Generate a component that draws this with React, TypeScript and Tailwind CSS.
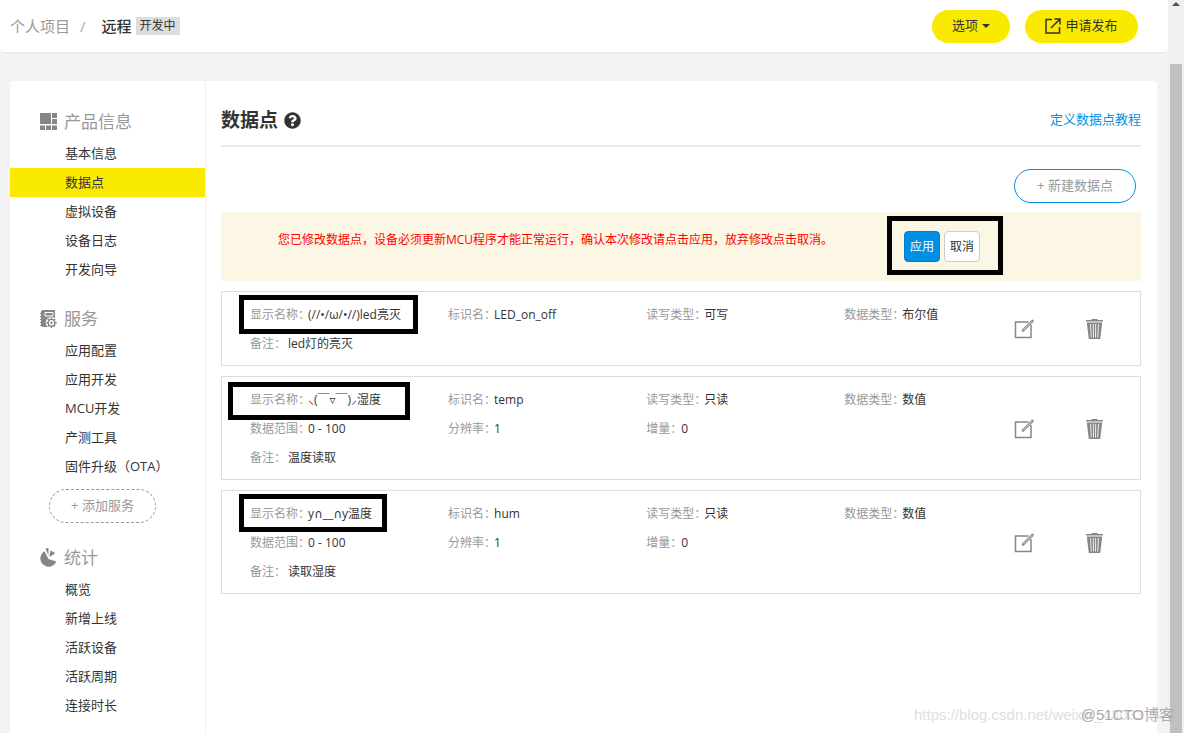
import React from "react";
import { FaQuestionCircle } from "react-icons/fa";

interface NavGroup {
  title: string;
  icon: React.ReactNode;
  items: string[];
  canAdd?: boolean;
}

interface Field {
  label: string;
  value: string;
}

interface DataPoint {
  id: string;
  rows: Field[][];
  note: string;
  mark: string;
}

const GridIcon = () => (
  <svg className="h-[17px] w-[17px]" viewBox="0 0 17 17" fill="#868686" aria-hidden="true">
    <path d="M0 0h11v11H0zM12 0h5v5h-5zM12 6h5v5h-5zM0 12.500h5V17H0zM6 12.500h5V17H6zM12 12.500h5V17h-5z" />
  </svg>
);

const ServiceIcon = () => (
  <svg className="h-[18px] w-[17px]" viewBox="0 0 17 18" aria-hidden="true">
    <path d="M2 0h13v17H2v-1H0v-1h1v-2H0v-1h1v-2H0V9h1V7H0V6h1V4H0V3h1V1h1z" fill="#868686" />
    <path d="M5 2.500h8V6H5z" fill="#868686" stroke="#fff" strokeWidth="1" />
    <circle cx="11.500" cy="12.700" r="5.800" fill="#fff" />
    <circle cx="11.500" cy="12.700" r="3.300" fill="none" stroke="#868686" strokeWidth="1.300" />
    <circle cx="11.500" cy="12.700" r="1.200" fill="#868686" />
    <path
      d="M11.500 7.500v2M11.500 16v2M6.300 12.700h2M14.800 12.700h2M7.800 9l1.400 1.400M13.800 15l1.400 1.400M15.200 9l-1.400 1.400M9.200 15l-1.400 1.400"
      stroke="#868686"
      strokeWidth="1.500"
    />
  </svg>
);

const ChartIcon = () => (
  <svg className="h-[19px] w-[17px]" viewBox="0 0 17 19" fill="#868686" aria-hidden="true">
    <path d="M4.500 3.200 8.500 11l7.800 2.600A8.300 8.300 0 1 1 4.500 3.200z" />
    <path d="M5.500.6 8.600 0 8.300 7z" />
    <path d="M10.500 2.200 15.300 5.200 9.300 9z" />
  </svg>
);

const PublishIcon = () => (
  <svg className="h-4 w-4" viewBox="0 0 16 16" fill="none" stroke="#333" strokeWidth="1.500" aria-hidden="true">
    <path d="M7 1.500H1v13.500h13.500V9" />
    <path d="M6 10 14.500 1.500M9.500 1H15v5.500" />
  </svg>
);

const EditIcon = () => (
  <svg className="h-5 w-5" viewBox="0 0 20 20" fill="none" aria-hidden="true">
    <path d="M14.500 3H1.500v15.500H17V6" stroke="#868686" strokeWidth="1.500" />
    <path d="M9 11.500 18.500 2" stroke="#8a8a8a" strokeWidth="2.600" strokeLinecap="round" />
    <path d="M9.200 11.300 18.300 2.200" stroke="#ddd" strokeWidth="1" />
  </svg>
);

const TrashIcon = () => (
  <svg className="h-5 w-[17px]" viewBox="0 0 17 20" aria-hidden="true">
    <path d="M5.500 0h6v1H17v1.500H0V1h5.500z" fill="#868686" />
    <path d="M.8 3.500h15.400L14.200 20H2.800z" fill="#868686" />
    <path d="M4.500 5l.8 13.500M7.300 5l.2 13.500M9.700 5l-.2 13.500M12.500 5l-.8 13.500" stroke="#eee" strokeWidth="1" />
  </svg>
);

const navGroups: NavGroup[] = [
  {
    title: "产品信息",
    icon: <GridIcon />,
    items: ["基本信息", "数据点", "虚拟设备", "设备日志", "开发向导"],
  },
  {
    title: "服务",
    icon: <ServiceIcon />,
    items: ["应用配置", "应用开发", "MCU开发", "产测工具", "固件升级（OTA）"],
    canAdd: true,
  },
  {
    title: "统计",
    icon: <ChartIcon />,
    items: ["概览", "新增上线", "活跃设备", "活跃周期", "连接时长"],
  },
];

const dataPoints: DataPoint[] = [
  {
    id: "LED_on_off",
    rows: [
      [
        { label: "显示名称：", value: "(//•/ω/•//)led亮灭" },
        { label: "标识名：", value: "LED_on_off" },
        { label: "读写类型：", value: "可写" },
        { label: "数据类型：", value: "布尔值" },
      ],
    ],
    note: "led灯的亮灭",
    mark: "left-[17px] top-[3px] h-[39px] w-[179px]",
  },
  {
    id: "temp",
    rows: [
      [
        { label: "显示名称：", value: "⸜(￣▿￣)⸝湿度" },
        { label: "标识名：", value: "temp" },
        { label: "读写类型：", value: "只读" },
        { label: "数据类型：", value: "数值" },
      ],
      [
        { label: "数据范围：", value: "0 - 100" },
        { label: "分辨率：", value: "1" },
        { label: "增量：", value: "0" },
      ],
    ],
    note: "温度读取",
    mark: "left-[6px] top-[5px] h-[38px] w-[182px]",
  },
  {
    id: "hum",
    rows: [
      [
        { label: "显示名称：", value: "y∩__∩y温度" },
        { label: "标识名：", value: "hum" },
        { label: "读写类型：", value: "只读" },
        { label: "数据类型：", value: "数值" },
      ],
      [
        { label: "数据范围：", value: "0 - 100" },
        { label: "分辨率：", value: "1" },
        { label: "增量：", value: "0" },
      ],
    ],
    note: "读取湿度",
    mark: "left-[17px] top-[3px] h-[38px] w-[148px]",
  },
];

// label column width by number of characters
const labelWidths: Record<number, string> = {
  3: "w-[35px]",
  4: "w-[46px]",
  5: "w-[58px]",
};

const FieldItem = ({ label, value }: Field) => (
  <div className="flex whitespace-nowrap">
    <dt className={`${labelWidths[label.length]} shrink-0 text-[#999]`}>{label}</dt>
    <dd>{value}</dd>
  </div>
);

const DataPointCard = ({ point }: { point: DataPoint }) => (
  <li className="relative flex items-center border border-[#ddd] pt-2 pr-[37px] pb-[7px] pl-7">
    <dl className="min-w-0 flex-1 text-xs leading-[29px]">
      {point.rows.map((row, i) => (
        <div key={i} className="grid grid-cols-[7fr_7fr_7fr_6fr]">
          {row.map((field) => (
            <FieldItem key={field.label} {...field} />
          ))}
        </div>
      ))}
      <div className="flex">
        <dt className="w-[38px] shrink-0 text-[#999]">备注：</dt>
        <dd>{point.note}</dd>
      </div>
    </dl>
    <div className="flex gap-[52px]">
      <button type="button" aria-label="编辑">
        <EditIcon />
      </button>
      <button type="button" aria-label="删除">
        <TrashIcon />
      </button>
    </div>
    <span className={`pointer-events-none absolute border-[5px] border-black ${point.mark}`} />
  </li>
);

const Sidebar = () => (
  <nav className="flex w-[196px] shrink-0 flex-col gap-4 border-r border-[#f0f0f0] pt-[22px]">
    {navGroups.map((group) => (
      <section key={group.title}>
        <h2 className="flex h-9 items-center gap-[7px] pt-px pl-[30px] text-[17px] text-[#999]">
          {group.icon}
          {group.title}
        </h2>
        <ul className="text-[13px] leading-[29px]">
          {group.items.map((item) => (
            <li key={item}>
              <a
                href="#"
                className={`block pl-[55px] whitespace-nowrap ${item === "数据点" ? "bg-[#faea00]" : ""}`}
              >
                {item}
              </a>
            </li>
          ))}
        </ul>
        {group.canAdd && (
          <button
            type="button"
            className="mt-2 ml-[39px] h-[34px] w-[107px] rounded-full border border-dashed border-[#999] text-[13px] text-[#999]"
          >
            + 添加服务
          </button>
        )}
      </section>
    ))}
  </nav>
);

const Header = () => (
  <header className="flex h-[52px] shrink-0 items-center justify-between rounded-b bg-white pr-[30px] pl-[10px] shadow-xs">
    <div className="flex items-center text-[15px]">
      <a href="#" className="text-[#999]">个人项目</a>
      <span className="px-[10px] text-[#aaa]">/</span>
      <h1 className="pl-[6px] font-medium">远程</h1>
      <span className="ml-1 bg-[#ddd] px-1 text-xs leading-[18px]">开发中</span>
    </div>
    <div className="flex gap-[15px] text-[13px]">
      <button type="button" className="flex h-[33px] w-[78px] items-center justify-center gap-1 rounded-full bg-[#faea00]">
        选项
        <span className="border-x-4 border-t-4 border-x-transparent border-t-[#333]" />
      </button>
      <button type="button" className="flex h-[33px] w-[113px] items-center justify-center gap-1 rounded-full bg-[#faea00]">
        <PublishIcon />
        申请发布
      </button>
    </div>
  </header>
);

const App = () => {
  return (
    <div className="relative flex h-screen overflow-hidden bg-[#f3f3f3] font-['Open_Sans','DejaVu_Sans','Noto_Sans_CJK_SC',sans-serif] text-[#333]">
      <div className="flex min-w-0 flex-1 flex-col">
        <Header />
        <div className="mt-[29px] mr-[11px] ml-[10px] flex flex-1 rounded-t bg-white">
          <Sidebar />
          <main className="min-w-0 flex-1 pr-4 pl-[15px]">
            <div className="flex h-[66px] items-center justify-between border-b-2 border-[#e8e8e8] pt-[14px]">
              <h2 className="flex items-center gap-[6px] text-[19px] font-bold">
                数据点
                <FaQuestionCircle className="h-[17px] w-[17px]" />
              </h2>
              <a href="#" className="text-[13px] text-[#0090e3]">定义数据点教程</a>
            </div>

            <div className="flex justify-end pt-[22px] pr-[5px] pb-[9px]">
              <button type="button" className="h-[34px] w-[122px] rounded-full border border-[#0090e3] text-[13px] text-[#999]">
                + 新建数据点
              </button>
            </div>

            <div role="alert" className="flex h-[69px] items-start bg-[#fcf6e4] pt-[19px] pl-[57px] text-xs">
              <p className="min-w-0 flex-1 leading-[18px] whitespace-nowrap text-[#f00]">
                您已修改数据点，设备必须更新MCU程序才能正常运行，确认本次修改请点击应用，放弃修改点击取消。
              </p>
              <div className="relative mr-[161px] flex gap-1">
                <button type="button" className="h-[31px] w-9 rounded border border-[#0080cb] bg-[#0090e3] text-white">
                  应用
                </button>
                <button type="button" className="h-[31px] w-9 rounded border border-[#ccc] bg-white">
                  取消
                </button>
                <span className="pointer-events-none absolute -top-[15px] -left-[17px] h-[59px] w-[116px] border-[5px] border-black" />
              </div>
            </div>

            <ul className="mt-[10px] flex flex-col gap-[10px]">
              {dataPoints.map((point) => (
                <DataPointCard key={point.id} point={point} />
              ))}
            </ul>
          </main>
        </div>
      </div>

      <div className="flex w-4 shrink-0 flex-col items-center bg-[#f1f1f1]">
        <span className="mt-[2px] border-x-4 border-b-4 border-x-transparent border-b-[#505050]" />
        <span className="mt-[58px] w-3 flex-1 bg-[#c0c0c0]" />
      </div>

      <span className="absolute right-[10px] bottom-2 w-[260px] overflow-hidden font-['Liberation_Sans',sans-serif] text-[15px] leading-5 whitespace-nowrap text-[#e0e0e0]">
        https://blog.csdn.net/weixin_43033
      </span>
      <span className="absolute right-[10px] bottom-2 font-['Liberation_Sans','Noto_Sans_CJK_SC',sans-serif] text-[15px] leading-5 text-[#aaa]">
        @51CTO博客
      </span>
    </div>
  );
};

export default App;
